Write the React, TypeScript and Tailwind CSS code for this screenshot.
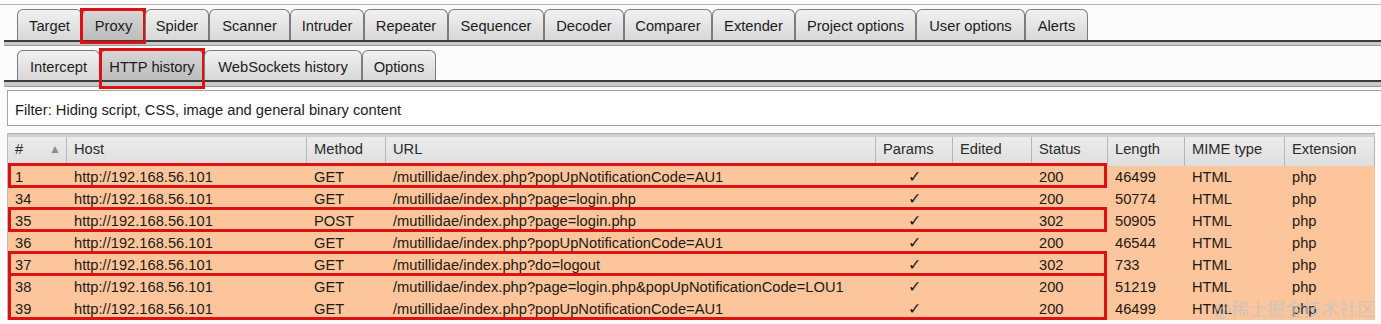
import React from "react";

const mainTabs = [
  { label: "Target", w: 65 },
  { label: "Proxy", w: 63, active: true },
  { label: "Spider", w: 64 },
  { label: "Scanner", w: 81 },
  { label: "Intruder", w: 74 },
  { label: "Repeater", w: 84 },
  { label: "Sequencer", w: 96 },
  { label: "Decoder", w: 80 },
  { label: "Comparer", w: 88 },
  { label: "Extender", w: 83 },
  { label: "Project options", w: 121 },
  { label: "User options", w: 109 },
  { label: "Alerts", w: 63 },
];

const subTabs = [
  { label: "Intercept", w: 83 },
  { label: "HTTP history", w: 104, active: true },
  { label: "WebSockets history", w: 158 },
  { label: "Options", w: 74 },
];

const columns = ["#", "Host", "Method", "URL", "Params", "Edited", "Status", "Length", "MIME type", "Extension"];

type Row = { id: string; method: string; url: string; status: string; length: string };

// grupos: los que van en recuadro rojo y los que no
const groups: { boxed: boolean; rows: Row[] }[] = [
  { boxed: true, rows: [{ id: "1", method: "GET", url: "/mutillidae/index.php?popUpNotificationCode=AU1", status: "200", length: "46499" }] },
  { boxed: false, rows: [{ id: "34", method: "GET", url: "/mutillidae/index.php?page=login.php", status: "200", length: "50774" }] },
  { boxed: true, rows: [{ id: "35", method: "POST", url: "/mutillidae/index.php?page=login.php", status: "302", length: "50905" }] },
  { boxed: false, rows: [{ id: "36", method: "GET", url: "/mutillidae/index.php?popUpNotificationCode=AU1", status: "200", length: "46544" }] },
  { boxed: true, rows: [{ id: "37", method: "GET", url: "/mutillidae/index.php?do=logout", status: "302", length: "733" }] },
  {
    boxed: true,
    rows: [
      { id: "38", method: "GET", url: "/mutillidae/index.php?page=login.php&popUpNotificationCode=LOU1", status: "200", length: "51219" },
      { id: "39", method: "GET", url: "/mutillidae/index.php?popUpNotificationCode=AU1", status: "200", length: "46499" },
    ],
  },
];

const grid = "grid grid-cols-[59px_240px_79px_490px_77px_79px_76px_77px_100px_90px]";

function Tab({ label, w, active, sub }: { label: string; w: number; active?: boolean; sub?: boolean }) {
  return (
    <div className="relative" style={{ width: w }}>
      <div
        className={`flex items-center justify-center rounded-t-[6px] border border-b-0 border-[#7c7c7c] text-[#1c1c1c] ${
          sub ? "h-[30px] pt-[4px]" : "h-[31px] pt-[2px]"
        } ${active ? "bg-gradient-to-b from-[#d6d6d6] to-[#bdbdbd]" : "bg-gradient-to-b from-[#f1f1f1] to-[#d8d8d8]"}`}
      >
        {label}
      </div>
      {active && (
        <div
          className={`absolute border-[3px] border-[#dc1111] ${
            sub ? "-left-px -right-px -top-[2px] -bottom-[9px]" : "-left-[2px] -right-px -top-px -bottom-[4px]"
          }`}
        />
      )}
    </div>
  );
}

function Strip({ h }: { h: string }) {
  return <div className={`${h} border-t-2 border-b border-t-[#3c3c3c] border-b-[#9a9a9a] bg-[#c9c9c9] ml-[4px]`} />;
}

export default function App() {
  return (
    <div className="relative w-[1381px] h-[324px] overflow-hidden bg-[#fbfbfb] font-['Liberation_Sans',Arial,sans-serif] text-[14.7px] leading-none">
      <div className="h-[4px]" />
      <div className="h-px bg-[#b8b8b8]" />
      <div className="h-[4px]" />

      {/* tabs principales */}
      <div className="relative z-10 flex items-end pl-[17px]">
        {mainTabs.map((t) => (
          <Tab key={t.label} {...t} />
        ))}
      </div>
      <Strip h="h-[6px]" />
      <div className="h-[4px]" />

      {/* sub tabs */}
      <div className="relative z-10 flex items-end pl-[17px]">
        {subTabs.map((t) => (
          <Tab key={t.label} {...t} sub />
        ))}
      </div>
      <Strip h="h-[7px]" />
      <div className="h-[3px]" />

      {/* filtro */}
      <div className="ml-[7px] w-[1380px] h-[36px] border border-[#a4a4a4] bg-white flex items-center pl-[7px] pt-[5px] text-[#1c1c1c]">
        Filter: Hiding script, CSS, image and general binary content
      </div>
      <div className="h-[7px]" />

      {/* tabla */}
      <div className="ml-[7px] w-[1368px] border-l border-[#bdbdbd]">
        <div className="h-[4px] border-t border-[#b0b0b0] bg-[#d2d2d2]" />
        <div className={`${grid} h-[29px] bg-gradient-to-b from-[#ececec] to-[#dedede] text-[#2a2a2a]`}>
          {columns.map((c, i) => (
            <div key={c} className="relative flex items-center pl-[7px] pb-[4px] border-r border-[#b6b6b6]">
              {c}
              {i === 0 && <span className="absolute left-[41px] top-[6px] text-[12px] text-[#8c8c8c]">▲</span>}
            </div>
          ))}
        </div>

        {groups.map((g, gi) => (
          <div key={gi} className="relative">
            {g.rows.map((r) => (
              <div key={r.id} className={`${grid} h-[22px] bg-[#fcc59b] text-[#1e1a16]`}>
                <div className="flex items-center pl-[7px]">{r.id}</div>
                <div className="flex items-center pl-[7px]">http://192.168.56.101</div>
                <div className="flex items-center pl-[7px]">{r.method}</div>
                <div className="flex items-center pl-[7px] whitespace-nowrap">{r.url}</div>
                <div className="flex items-center justify-center text-[16px]">✓</div>
                <div />
                <div className="flex items-center pl-[7px]">{r.status}</div>
                <div className="flex items-center pl-[7px]">{r.length}</div>
                <div className="flex items-center pl-[7px]">HTML</div>
                <div className="flex items-center pl-[7px]">php</div>
              </div>
            ))}
            {g.boxed && (
              <div className="absolute left-0 w-[1099px] -top-[3px] bottom-0 border-[3px] border-[#dc1111] pointer-events-none" />
            )}
          </div>
        ))}
      </div>

      {/* marca de agua */}
      <div className="absolute left-[1214px] top-[299px] text-[18px] text-[#c4c4c4]/80 font-['Noto_Sans_CJK_SC',sans-serif] leading-none">
        @稀土掘金技术社区
      </div>
    </div>
  );
}
